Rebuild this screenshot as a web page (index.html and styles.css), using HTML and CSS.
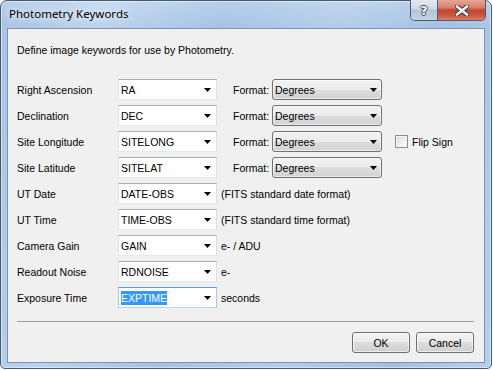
FILE: index.html
```html
<!DOCTYPE html>
<html lang="en">
<head>
    <meta charset="UTF-8">
    <title>Photometry Keywords</title>
    <link rel="stylesheet" href="styles.css">
</head>
<body>
    <div class="window">
        <div class="titlebar">
            <span class="title">Photometry Keywords</span>
            <div class="caption-btns">
                <div class="cbtn help">?</div>
                <div class="cbtn close">
                    <svg width="14" height="11" viewBox="0 0 14 11">
                        <path d="M2 1.5 L12 9.5 M12 1.5 L2 9.5" stroke="#3b3b3b" stroke-width="4.6" stroke-linecap="square"/>
                        <path d="M2 1.5 L12 9.5 M12 1.5 L2 9.5" stroke="#fff" stroke-width="2.4" stroke-linecap="square"/>
                    </svg>
                </div>
            </div>
        </div>
        <div class="client">
            <p class="intro">Define image keywords for use by Photometry.</p>

            <div class="rows">
                <div class="row">
                    <span class="label">Right Ascension</span>
                    <div class="combo"><span>RA</span><svg class="arrow" width="7" height="4"><polygon points="0,0 7,0 3.5,4" fill="#000"/></svg></div>
                    <span class="fmt-label">Format:</span>
                    <div class="dropdown"><span>Degrees</span><svg class="arrow" width="7" height="4"><polygon points="0,0 7,0 3.5,4" fill="#000"/></svg></div>
                </div>
                <div class="row">
                    <span class="label">Declination</span>
                    <div class="combo"><span>DEC</span><svg class="arrow" width="7" height="4"><polygon points="0,0 7,0 3.5,4" fill="#000"/></svg></div>
                    <span class="fmt-label">Format:</span>
                    <div class="dropdown"><span>Degrees</span><svg class="arrow" width="7" height="4"><polygon points="0,0 7,0 3.5,4" fill="#000"/></svg></div>
                </div>
                <div class="row">
                    <span class="label">Site Longitude</span>
                    <div class="combo"><span>SITELONG</span><svg class="arrow" width="7" height="4"><polygon points="0,0 7,0 3.5,4" fill="#000"/></svg></div>
                    <span class="fmt-label">Format:</span>
                    <div class="dropdown"><span>Degrees</span><svg class="arrow" width="7" height="4"><polygon points="0,0 7,0 3.5,4" fill="#000"/></svg></div>
                    <label class="check"><span class="box"></span>Flip Sign</label>
                </div>
                <div class="row">
                    <span class="label">Site Latitude</span>
                    <div class="combo"><span>SITELAT</span><svg class="arrow" width="7" height="4"><polygon points="0,0 7,0 3.5,4" fill="#000"/></svg></div>
                    <span class="fmt-label">Format:</span>
                    <div class="dropdown"><span>Degrees</span><svg class="arrow" width="7" height="4"><polygon points="0,0 7,0 3.5,4" fill="#000"/></svg></div>
                </div>
                <div class="row">
                    <span class="label">UT Date</span>
                    <div class="combo"><span>DATE-OBS</span><svg class="arrow" width="7" height="4"><polygon points="0,0 7,0 3.5,4" fill="#000"/></svg></div>
                    <span class="suffix">(FITS standard date format)</span>
                </div>
                <div class="row">
                    <span class="label">UT Time</span>
                    <div class="combo"><span>TIME-OBS</span><svg class="arrow" width="7" height="4"><polygon points="0,0 7,0 3.5,4" fill="#000"/></svg></div>
                    <span class="suffix">(FITS standard time format)</span>
                </div>
                <div class="row">
                    <span class="label">Camera Gain</span>
                    <div class="combo"><span>GAIN</span><svg class="arrow" width="7" height="4"><polygon points="0,0 7,0 3.5,4" fill="#000"/></svg></div>
                    <span class="suffix">e- / ADU</span>
                </div>
                <div class="row">
                    <span class="label">Readout Noise</span>
                    <div class="combo"><span>RDNOISE</span><svg class="arrow" width="7" height="4"><polygon points="0,0 7,0 3.5,4" fill="#000"/></svg></div>
                    <span class="suffix">e-</span>
                </div>
                <div class="row">
                    <span class="label">Exposure Time</span>
                    <div class="combo focused"><span class="selected">EXPTIME</span><svg class="arrow" width="7" height="4"><polygon points="0,0 7,0 3.5,4" fill="#000"/></svg></div>
                    <span class="suffix">seconds</span>
                </div>
            </div>

            <div class="separator"></div>

            <div class="footer">
                <div class="button">OK</div>
                <div class="button">Cancel</div>
            </div>
        </div>
    </div>
</body>
</html>
```

FILE: styles.css
```css
body {
    margin: 0;
    background-color: #fff;
    font-family: "Liberation Sans", Arial, sans-serif;
    font-size: 10.5px;
    color: #000;
}
.window {
    width: 492px;
    height: 369px;
    box-sizing: border-box;
    border: 1px solid #4a5a6d;
    border-radius: 7px 7px 5px 5px;
    padding: 0 6px 5px 6px;
    display: flex;
    flex-direction: column;
    background:
        linear-gradient(to bottom, rgba(255, 255, 255, 0.2), rgba(255, 255, 255, 0) 28px),
        linear-gradient(100deg, #a7c3e4 0%, #bcd3ed 18%, #a6c2e4 40%, #b3cce9 62%, #a3c0e3 82%, #b6cfeb 100%);
    box-shadow: inset 0 0 0 1px rgba(255, 255, 255, 0.45);
}
.titlebar {
    height: 27px;
    display: flex;
    align-items: flex-start;
}
.title {
    font-family: "Noto Sans", sans-serif;
    font-size: 11.5px;
    padding: 5px 0 0 2px;
    color: #000;
    text-shadow: 0 0 6px rgba(255, 255, 255, 0.9), 0 0 10px rgba(255, 255, 255, 0.7);
}
.caption-btns {
    margin-left: auto;
    margin-top: -1px;
    display: flex;
    height: 20px;
    border: 1px solid #4d5c6e;
    border-top: none;
    border-radius: 0 0 5px 5px;
    overflow: hidden;
    margin-right: -1px;
}
.cbtn {
    display: flex;
    align-items: center;
    justify-content: center;
    height: 20px;
}
.help {
    width: 26px;
    border-right: 1px solid #4d5c6e;
    background: linear-gradient(to bottom, #e2eaf3 0%, #cdd9e6 45%, #b5c5d7 50%, #c4d3e3 100%);
    font-family: "DejaVu Sans", sans-serif;
    font-weight: bold;
    font-size: 13px;
    color: #fff;
    text-shadow: 1px 0 0 #3d4a5a, -1px 0 0 #3d4a5a, 0 1px 0 #3d4a5a, 0 -1px 0 #3d4a5a;
}
.close {
    width: 47px;
    background: linear-gradient(to bottom, #e6a697 0%, #d47d6a 40%, #c24530 50%, #c9543d 75%, #dd7c62 100%);
}
.client {
    flex: 1;
    border: 1px solid #7f93ab;
    background-color: #f0f0f0;
    padding: 15px 10px 0 9px;
    display: flex;
    flex-direction: column;
}
.intro {
    margin: 0;
    line-height: 13px;
}
.rows {
    margin-top: 22px;
    display: flex;
    flex-direction: column;
    gap: 5px;
}
.row {
    display: flex;
    align-items: center;
    height: 21px;
}
.label {
    width: 101px;
}
.combo {
    width: 99px;
    height: 21px;
    box-sizing: border-box;
    border: 1px solid;
    border-color: #abadb3 #dbdfe6 #e3e9ef #e2e3ea;
    background-color: #fff;
    display: flex;
    align-items: center;
    padding-left: 2px;
}
.combo.focused {
    border-color: #5a9ddb #a9cbed #b6d5f2 #a9cbed;
}
.selected {
    background-color: #3399ff;
    color: #fff;
    line-height: 14px;
}
.arrow {
    margin-left: auto;
    margin-right: 5px;
}
.fmt-label {
    width: 39px;
    margin-left: 16px;
}
.dropdown {
    width: 110px;
    height: 21px;
    box-sizing: border-box;
    border: 1px solid #707070;
    border-radius: 3px;
    background: linear-gradient(to bottom, #f2f2f2 0%, #ebebeb 50%, #dddddd 50%, #d2d2d2 100%);
    box-shadow: inset 0 0 0 1px rgba(255, 255, 255, 0.6);
    display: flex;
    align-items: center;
    padding-left: 2px;
}
.dropdown .arrow {
    margin-right: 4px;
}
.check {
    display: flex;
    align-items: center;
    margin-left: 13px;
}
.box {
    width: 13px;
    height: 13px;
    box-sizing: border-box;
    border: 1px solid #8e8f8f;
    background: linear-gradient(135deg, #dcdcdc, #fefefe);
    box-shadow: inset 0 0 0 1px #f4f4f4;
    margin-right: 4px;
}
.suffix {
    margin-left: 4px;
}
.separator {
    margin-top: 13px;
    height: 1px;
    background-color: #a0a0a0;
}
.footer {
    margin-top: 10px;
    display: flex;
    justify-content: flex-end;
    gap: 6px;
}
.button {
    width: 58px;
    height: 21px;
    box-sizing: border-box;
    border: 1px solid #707070;
    border-radius: 3px;
    background: linear-gradient(to bottom, #f2f2f2 0%, #ebebeb 50%, #dddddd 50%, #cfcfcf 100%);
    box-shadow: inset 0 0 0 1px rgba(255, 255, 255, 0.6);
    display: flex;
    align-items: center;
    justify-content: center;
}
```
